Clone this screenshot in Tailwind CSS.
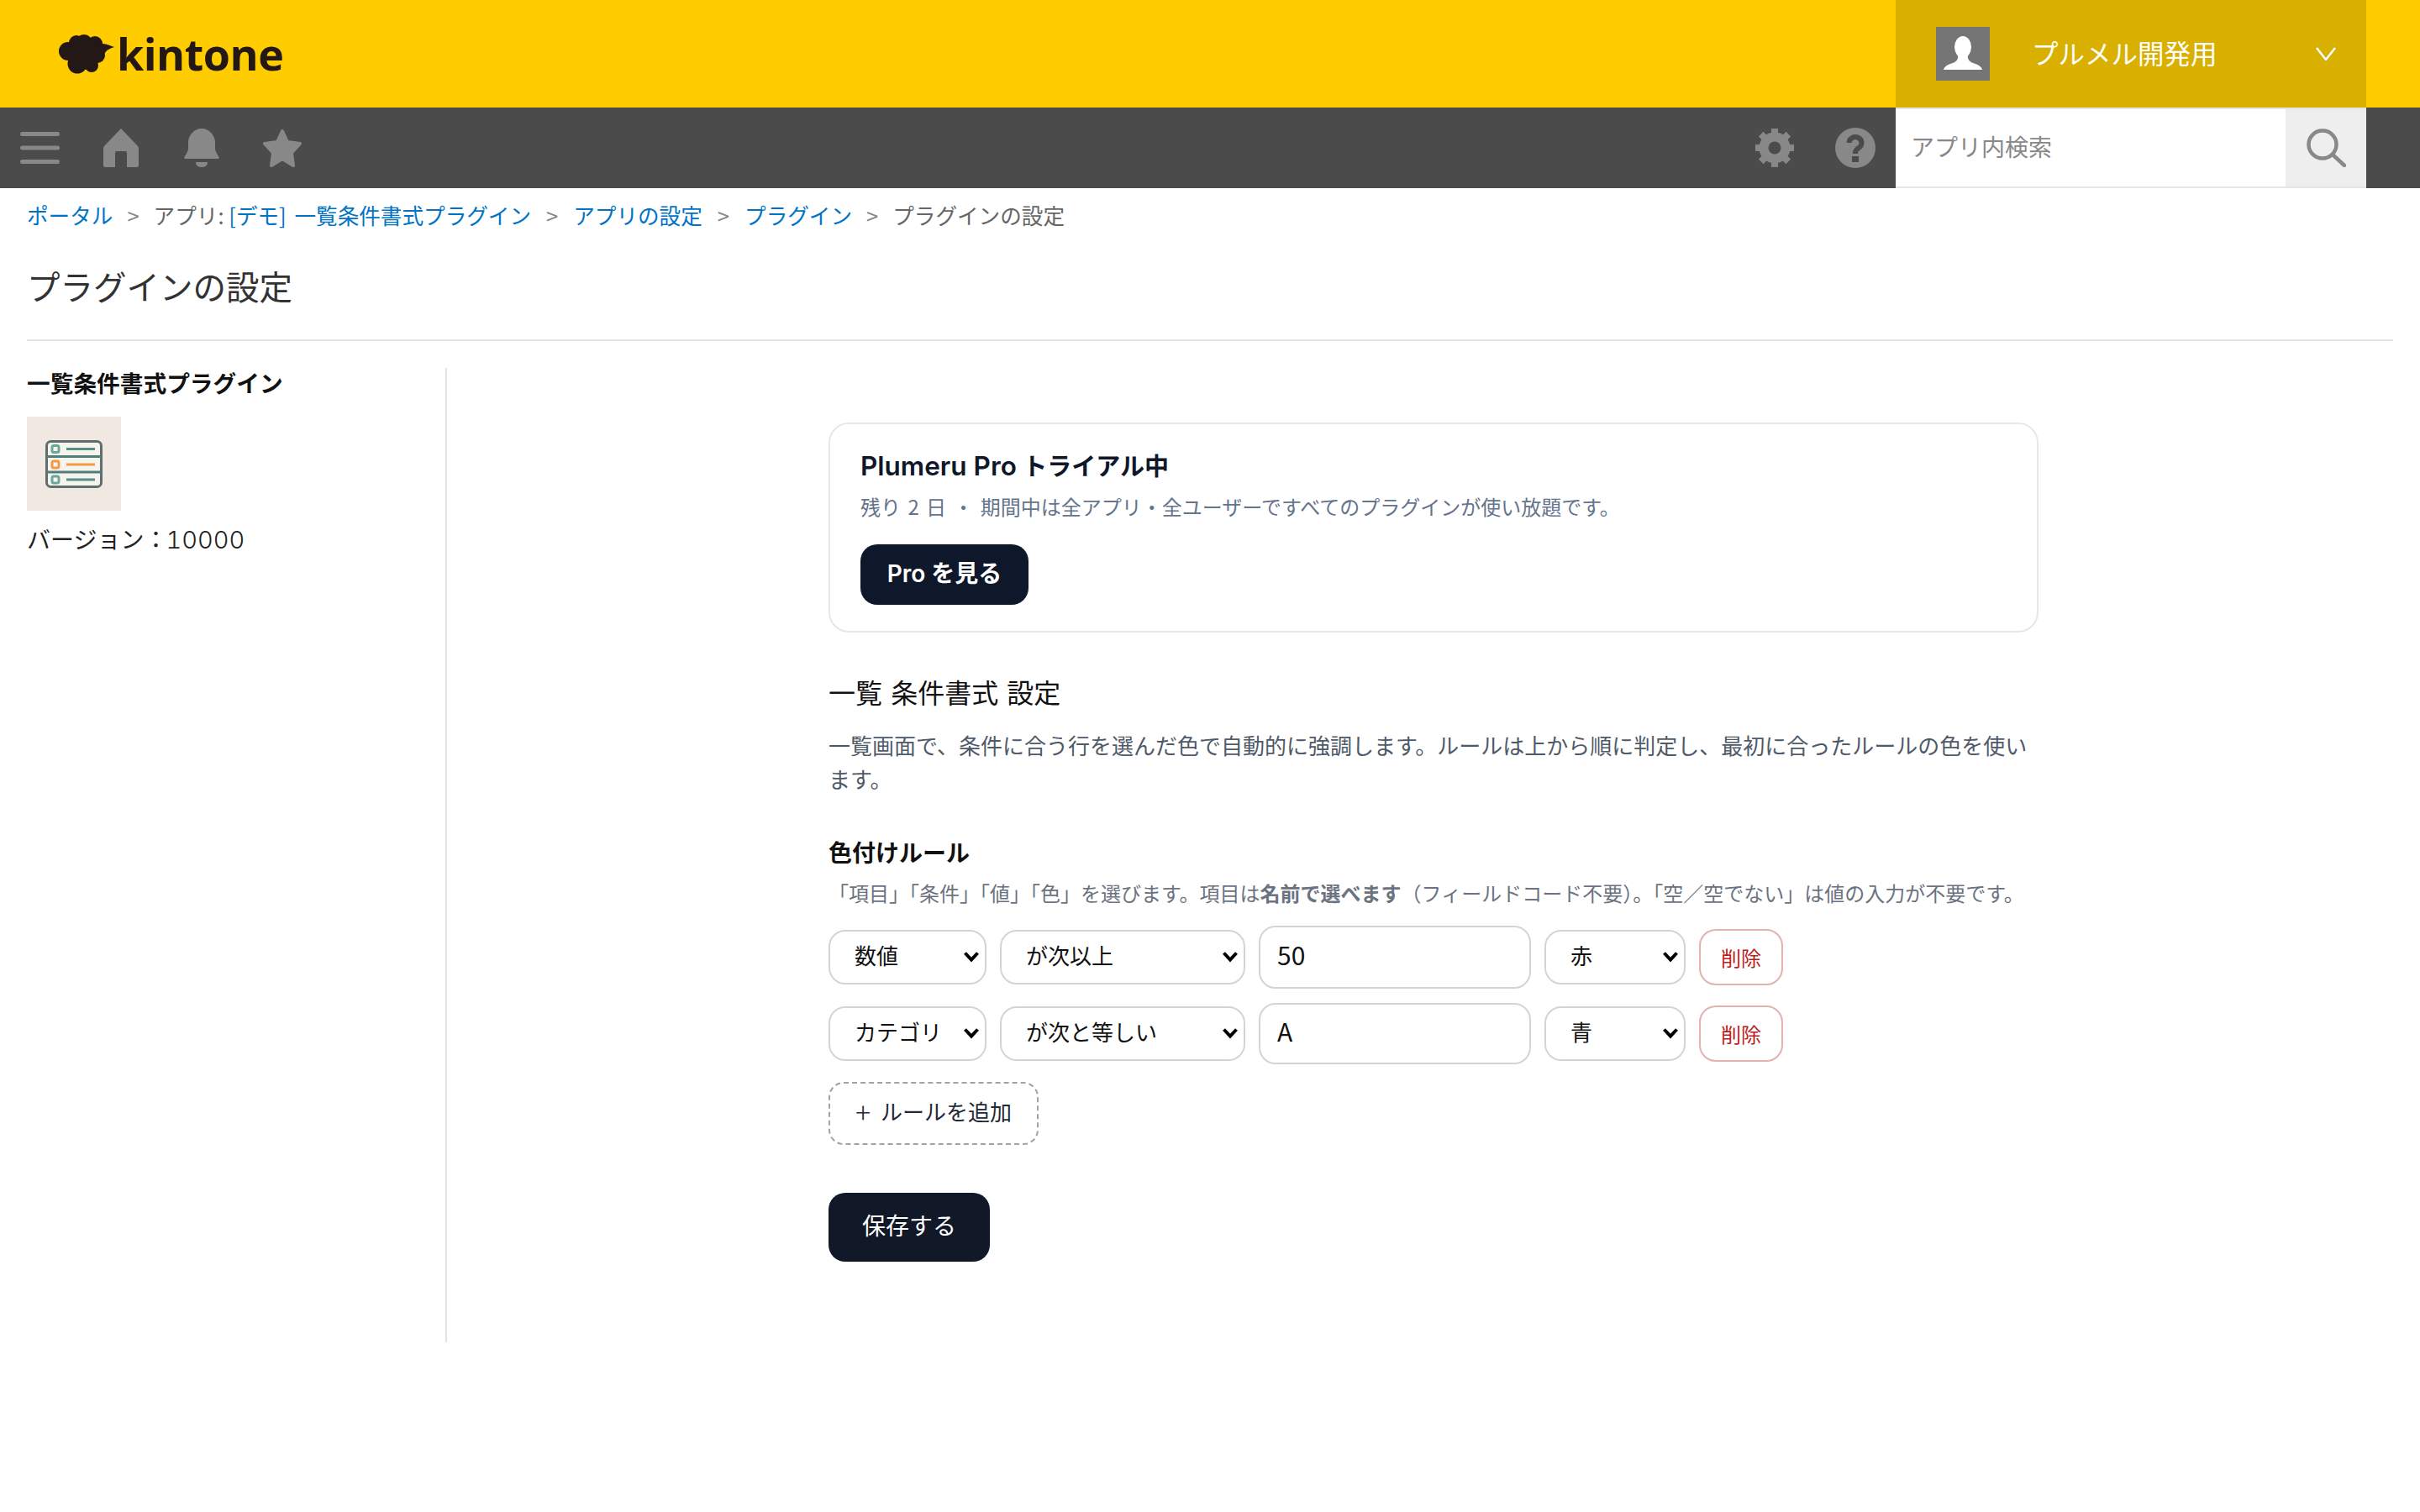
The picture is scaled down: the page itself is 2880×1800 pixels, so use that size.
<!DOCTYPE html>
<html lang="ja">
<head>
    <meta charset="UTF-8">
    <title>プラグインの設定</title>
    <script src="https://cdn.jsdelivr.net/npm/@tailwindcss/browser@4"></script>
</head>
<body class="w-[2880px] h-[1800px] overflow-hidden bg-white text-[#111111] font-['Noto_Sans_CJK_JP',sans-serif]">

    <!-- yellow header -->
    <header class="flex items-center h-[128px] bg-[#ffcc00]">
        <div class="flex items-center ml-[69px]">
            <svg class="w-[67px] h-[47px]" viewBox="0 0 67 47" fill="#231815">
                <circle cx="12" cy="20" r="11"/><circle cx="22" cy="10" r="9"/><circle cx="31" cy="10" r="10"/>
                <circle cx="44" cy="11" r="9"/><circle cx="47" cy="25" r="9"/><circle cx="23" cy="35" r="11.5"/>
                <circle cx="40" cy="37" r="8"/><circle cx="30" cy="24" r="18"/>
                <path d="M48 10Q58 11 67 15Q58 17 54 25Z"/>
            </svg>
            <span class="ml-[3px] text-[52px] leading-[60px] font-bold font-['Open_Sans',sans-serif] tracking-[-0.5px] text-[#231815]">kintone</span>
        </div>
        <div class="flex items-center ml-auto mr-[64px] w-[560px] h-full bg-[#d9af00]">
            <div class="ml-[48px] w-[64px] h-[64px] bg-[#757575]">
                <svg class="w-[64px] h-[64px]" viewBox="0 0 64 64" fill="#fff">
                    <ellipse cx="32" cy="24" rx="10" ry="13"/>
                    <path d="M26 32C27 38 25 41 20 43C14 45 10 47 9 51H55C54 47 50 45 44 43C39 41 37 38 38 32Z"/>
                </svg>
            </div>
            <span class="ml-[50px] mb-[4px] text-[31.5px] leading-[44px] text-white">プルメル開発用</span>
            <svg class="ml-auto mr-[36px] w-[24px] h-[16px]" viewBox="0 0 24 16" fill="none" stroke="#fff" stroke-width="2.5"><path d="M1 1L12 15L23 1"/></svg>
        </div>
    </header>

    <!-- dark nav bar -->
    <nav class="flex items-center h-[96px] bg-[#4b4b4b]">
        <div class="flex items-center ml-[24px]">
            <svg class="w-[47px] h-[38px]" viewBox="0 0 47 38" fill="#888888">
                <rect width="47" height="5" rx="2.5"/><rect y="16.5" width="47" height="5" rx="2.5"/><rect y="33" width="47" height="5" rx="2.5"/>
            </svg>
            <svg class="ml-[52px] w-[42px] h-[46px]" viewBox="0 0 42 46" fill="#888888">
                <path d="M21 0L41 21Q42 22 42 24V44Q42 46 40 46H28V29Q28 27 26 27H16Q14 27 14 29V46H2Q0 46 0 44V24Q0 22 1 21Z"/>
            </svg>
            <svg class="ml-[54px] w-[42px] h-[46px]" viewBox="0 0 42 46" fill="#888888">
                <path d="M21 0C12 0 5 8 5 17V24Q5 27 1 33Q-1 36 2 36H40Q43 36 41 33Q37 27 37 24V17C37 8 30 0 21 0Z"/>
                <path d="M14 40H28Q28 46 21 46Q14 46 14 40Z"/>
            </svg>
            <svg class="ml-[51px] w-[48px] h-[46px]" viewBox="0 0 48 46" fill="#888888" stroke="#888888" stroke-width="4" stroke-linejoin="round">
                <path d="M24 3L30 16L45 18L35 29L37 44L24 36L11 44L13 29L3 18L18 16Z"/>
            </svg>
        </div>
        <div class="flex items-center ml-auto h-full">
            <svg class="w-[48px] h-[48px]" viewBox="0 0 48 48" fill="none" stroke="#888888">
                <circle cx="24" cy="24" r="13" stroke-width="11"/>
                <g stroke-width="8">
                    <path d="M24 1V8"/><path d="M24 40V47"/><path d="M1 24H8"/><path d="M40 24H47"/>
                    <path d="M7.7 7.7L13 13"/><path d="M35 35L40.3 40.3"/><path d="M7.7 40.3L13 35"/><path d="M35 13L40.3 7.7"/>
                </g>
            </svg>
            <svg class="ml-[48px] w-[48px] h-[48px]" viewBox="0 0 48 48">
                <circle cx="24" cy="24" r="24" fill="#888888"/>
                <path d="M16.5 18a7.5 7 0 1 1 11.5 6q-4 2.500 -4 6v1" fill="none" stroke="#4b4b4b" stroke-width="6"/>
                <rect x="20" y="34" width="8" height="7" fill="#4b4b4b"/>
            </svg>
            <div class="flex items-center ml-[24px] mr-[64px] w-[560px] h-full border-y-2 border-[#e3e7e8] bg-white">
                <span class="ml-[18px] mb-[4px] text-[28px] text-[#888888]">アプリ内検索</span>
                <div class="flex items-center justify-center ml-auto w-[96px] h-full bg-[#eeeeee]">
                    <svg class="w-[47px] h-[46px]" viewBox="0 0 47 46" fill="none" stroke="#888888" stroke-width="4.500" stroke-linecap="round">
                        <circle cx="19" cy="19" r="16.500"/><path d="M31 31L45 44"/>
                    </svg>
                </div>
            </div>
        </div>
    </nav>

    <div class="px-[32px]">
        <div class="flex items-center h-[68px] pb-[3px] text-[25.6px] text-[#666666]">
            <a class="text-[#0073c6]">ポータル</a>
            <span class="mx-[17px] text-[#888888]">&gt;</span>
            <span>アプリ:&nbsp;</span><a class="text-[#0073c6] [word-spacing:4px]">[デモ] 一覧条件書式プラグイン</a>
            <span class="mx-[18px] text-[#888888]">&gt;</span>
            <a class="text-[#0073c6]">アプリの設定</a>
            <span class="mx-[18px] text-[#888888]">&gt;</span>
            <a class="text-[#0073c6]">プラグイン</a>
            <span class="mx-[17px] text-[#888888]">&gt;</span>
            <span>プラグインの設定</span>
        </div>
        <div class="h-[114px] pt-[22px] border-b-2 border-[#e3e3e3]">
            <h1 class="text-[39.5px] leading-[52px] text-[#333333]">プラグインの設定</h1>
        </div>

        <div class="flex mt-[32px]">
            <aside class="w-[500px] h-[1160px] border-r-2 border-[#e3e3e3]">
                <div class="-mt-[2px] text-[27.7px] leading-[38px] font-bold">一覧条件書式プラグイン</div>
                <div class="flex items-center justify-center mt-[22px] w-[112px] h-[112px] bg-[#f0e8e1]">
                    <svg class="w-[68px] h-[57px]" viewBox="0 0 68 57" fill="none" stroke-width="3">
                        <rect x="1.500" y="1.500" width="65" height="54" rx="5" fill="#f7f4ee" stroke="#5f6f6f"/>
                        <path d="M2 19.500H66M2 38H66" stroke="#4f7f78"/>
                        <rect x="8" y="6.500" width="8" height="8" rx="2" stroke="#6aa79c"/>
                        <path d="M25 10.500H59" stroke="#4f9185"/>
                        <rect x="8" y="25" width="8" height="8" rx="2" stroke="#f2994a"/>
                        <path d="M25 29H59" stroke="#f2994a"/>
                        <rect x="8" y="43" width="8" height="8" rx="2" stroke="#6aa79c"/>
                        <path d="M25 47H59" stroke="#4f9185"/>
                    </svg>
                </div>
                <div class="flex items-baseline mt-[12px] text-[28px] leading-[42px] text-[#222222]">バージョン：<span class="-ml-[2px] text-[29px] font-light tabular-nums font-['Inter',sans-serif]">10000</span></div>
            </aside>

            <main class="pl-[454px] pt-[65px] w-[1894px]">
                <section class="px-[36px] pt-[30px] pb-[31px] border-2 border-[#e2e8f0] rounded-[24px]">
                    <div class="h-[40px] text-[29px] leading-[40px] font-semibold text-[#0f172a] font-['Inter','Noto_Sans_CJK_JP',sans-serif]"><span class="text-[31.5px]">Plumeru Pro</span> トライアル中</div>
                    <p class="mt-[10px] text-[24px] leading-[36px] text-[#64748b] [word-spacing:3px]">残り 2 日 ・ 期間中は全アプリ・全ユーザーですべてのプラグインが使い放題です。</p>
                    <button class="mt-[27px] w-[200px] h-[72px] pb-[3px] rounded-[20px] bg-[#0f172a] text-[28px] font-semibold text-white font-['Inter','Noto_Sans_CJK_JP',sans-serif]">Pro を見る</button>
                </section>

                <h2 class="mt-[48px] text-[32px] leading-[44px] [word-spacing:3px]">一覧 条件書式 設定</h2>
                <p class="mt-[22px] text-[26px] leading-[40px] text-[#4f5a69]">一覧画面で、条件に合う行を選んだ色で自動的に強調します。ルールは上から順に判定し、最初に合ったルールの色を使います。</p>

                <h3 class="mt-[47px] text-[28px] leading-[40px] font-bold">色付けルール</h3>
                <p class="mt-[11px] text-[24px] leading-[36px] text-[#6b7280] whitespace-nowrap">「項目」「条件」「値」「色」を選びます。項目は<b class="font-bold">名前で選べます</b>（フィールドコード不要）。「空／空でない」は値の入力が不要です。</p>

                <div class="flex items-center gap-[16px] mt-[21px]">
                    <div class="relative w-[188px]">
                        <select class="appearance-none w-full h-[65px] pl-[29px] pb-[6px] border-2 border-[#d1d5db] rounded-[20px] bg-white text-[26px] text-[#111111]"><option>数値</option></select>
                        <svg class="absolute right-[9px] top-[25px] w-[18px] h-[14px] pointer-events-none" viewBox="0 0 18 14" fill="none" stroke="#000" stroke-width="4"><path d="M1.500 2.500L9 10.500L16.500 2.500"/></svg>
                    </div>
                    <div class="relative w-[292px]">
                        <select class="appearance-none w-full h-[65px] pl-[29px] pb-[6px] border-2 border-[#d1d5db] rounded-[20px] bg-white text-[26px] text-[#111111]"><option>が次以上</option></select>
                        <svg class="absolute right-[9px] top-[25px] w-[18px] h-[14px] pointer-events-none" viewBox="0 0 18 14" fill="none" stroke="#000" stroke-width="4"><path d="M1.500 2.500L9 10.500L16.500 2.500"/></svg>
                    </div>
                    <input class="w-[324px] h-[75px] pl-[20px] pb-[7px] border-2 border-[#d1d5db] rounded-[20px] text-[30px] text-[#111111]" value="50">
                    <div class="relative w-[168px]">
                        <select class="appearance-none w-full h-[65px] pl-[29px] pb-[6px] border-2 border-[#d1d5db] rounded-[20px] bg-white text-[26px] text-[#111111]"><option>赤</option></select>
                        <svg class="absolute right-[9px] top-[25px] w-[18px] h-[14px] pointer-events-none" viewBox="0 0 18 14" fill="none" stroke="#000" stroke-width="4"><path d="M1.500 2.500L9 10.500L16.500 2.500"/></svg>
                    </div>
                    <button class="w-[100px] h-[67px] border-2 border-[#e5b0b0] rounded-[20px] text-[24px] text-[#b91c1c]">削除</button>
                </div>
                <div class="flex items-center gap-[16px] mt-[17px]">
                    <div class="relative w-[188px]">
                        <select class="appearance-none w-full h-[65px] pl-[29px] pb-[6px] border-2 border-[#d1d5db] rounded-[20px] bg-white text-[26px] text-[#111111]"><option>カテゴリ</option></select>
                        <svg class="absolute right-[9px] top-[25px] w-[18px] h-[14px] pointer-events-none" viewBox="0 0 18 14" fill="none" stroke="#000" stroke-width="4"><path d="M1.500 2.500L9 10.500L16.500 2.500"/></svg>
                    </div>
                    <div class="relative w-[292px]">
                        <select class="appearance-none w-full h-[65px] pl-[29px] pb-[6px] border-2 border-[#d1d5db] rounded-[20px] bg-white text-[26px] text-[#111111]"><option>が次と等しい</option></select>
                        <svg class="absolute right-[9px] top-[25px] w-[18px] h-[14px] pointer-events-none" viewBox="0 0 18 14" fill="none" stroke="#000" stroke-width="4"><path d="M1.500 2.500L9 10.500L16.500 2.500"/></svg>
                    </div>
                    <input class="w-[324px] h-[73px] pl-[20px] pb-[7px] border-2 border-[#d1d5db] rounded-[20px] text-[30px] text-[#111111]" value="A">
                    <div class="relative w-[168px]">
                        <select class="appearance-none w-full h-[65px] pl-[29px] pb-[6px] border-2 border-[#d1d5db] rounded-[20px] bg-white text-[26px] text-[#111111]"><option>青</option></select>
                        <svg class="absolute right-[9px] top-[25px] w-[18px] h-[14px] pointer-events-none" viewBox="0 0 18 14" fill="none" stroke="#000" stroke-width="4"><path d="M1.500 2.500L9 10.500L16.500 2.500"/></svg>
                    </div>
                    <button class="w-[100px] h-[67px] border-2 border-[#e5b0b0] rounded-[20px] text-[24px] text-[#b91c1c]">削除</button>
                </div>

                <button class="block mt-[21px] w-[250px] h-[75px] pb-[6px] border-2 border-dashed border-[#9ca3af] rounded-[18px] text-[26px] text-[#1f2937]"><span class="inline-block mr-[12px] translate-y-[3px] text-[34px] leading-none font-light">+</span>ルールを追加</button>
                <button class="block mt-[57px] w-[192px] h-[82px] pb-[6px] rounded-[20px] bg-[#111827] text-[28px] text-white">保存する</button>
            </main>
        </div>
    </div>

</body>
</html>
